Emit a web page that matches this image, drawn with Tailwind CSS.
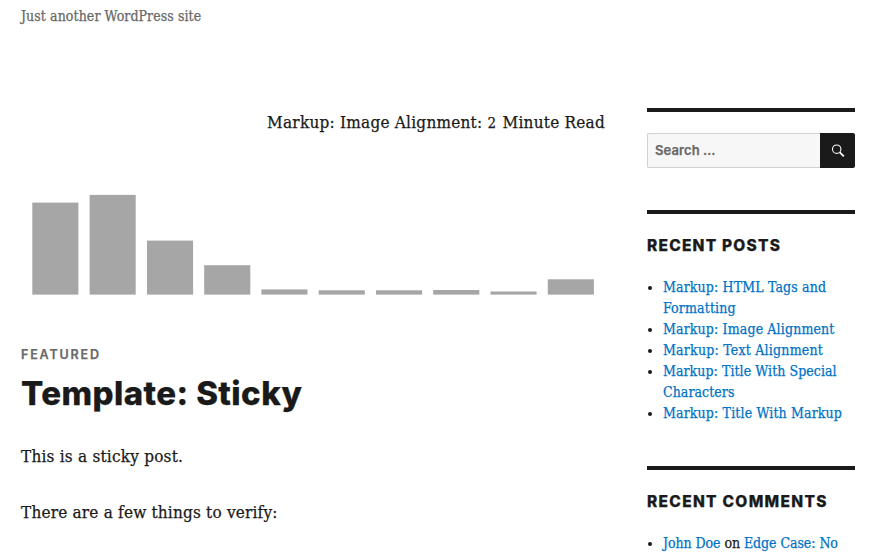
<!DOCTYPE html>
<html lang="en">
<head>
<meta charset="utf-8">
<title>WordPress site</title>
<script src="https://cdn.jsdelivr.net/npm/@tailwindcss/browser@4"></script>
</head>
<body class="h-[555px] overflow-hidden bg-white font-['DejaVu_Serif_Condensed','DejaVu_Serif',serif] text-[#1a1a1a] [-webkit-text-stroke-width:0.25px]">
<header class="h-[108px] pt-1.5 pl-[21px]">
  <p class="text-[14px] leading-[20px] tracking-[0.08px] text-[#686868]">Just another WordPress site</p>
</header>
<div class="flex">
  <main class="w-[605px] shrink-0 pl-[21px]">
    <p class="whitespace-nowrap text-right text-[17px] leading-[28px] tracking-[0.24px]">Markup: Image Alignment: <span class="inline-block w-[10px] text-left text-[15px] leading-none">2</span> Minute Read</p>
    <svg class="mt-[44px] block h-[130px] w-[584px]" viewBox="21 180 584 130" fill="#a6a6a6">
      <rect x="32.3" y="202.6" width="46.1" height="92"/>
      <rect x="89.6" y="194.9" width="46.1" height="99.7"/>
      <rect x="147" y="240.6" width="46.1" height="54"/>
      <rect x="204.2" y="265.2" width="46.1" height="29.4"/>
      <rect x="261.4" y="289.4" width="46.1" height="5.2"/>
      <rect x="318.7" y="290.3" width="46.1" height="4.3"/>
      <rect x="376" y="290.3" width="46.1" height="4.3"/>
      <rect x="433.2" y="290" width="46.1" height="4.6"/>
      <rect x="490.5" y="291.5" width="46.1" height="3.1"/>
      <rect x="547.8" y="279.3" width="46.1" height="15.3"/>
    </svg>
    <article class="pt-[35px]">
      <p class="font-[Inter,sans-serif] text-[12.5px] font-semibold leading-[20px] tracking-[1.85px] text-[#686868]">FEATURED</p>
      <h2 class="mt-2 font-[Inter,sans-serif] text-[33px] font-extrabold leading-[40px] tracking-[0.42px]">Template: Sticky</h2>
      <p class="mt-[29px] text-[17px] leading-[28px] tracking-[0.22px]">This is a sticky post.</p>
      <p class="mt-[28px] text-[17px] leading-[28px] tracking-[0.2px]">There are a few things to verify:</p>
    </article>
  </main>
  <aside class="ml-[42px] w-[208px] shrink-0 text-[14px] leading-[21px]">
    <section class="h-[102px] border-t-4 border-[#1a1a1a] pt-[21px]">
      <form class="flex h-[35px]">
        <div class="flex w-[173px] items-center rounded-l-[2px] border border-r-0 border-[#d1d1d1] bg-[#f7f7f7] pl-[7px] font-[Inter,sans-serif] text-[13px] font-semibold tracking-[0.1px] text-[#686868]">Search …</div>
        <button type="button" aria-label="Search" class="flex w-[35px] items-center justify-center rounded-r-[2px] bg-[#1a1a1a]">
          <svg class="size-[14px]" viewBox="0 0 14 14" fill="none" stroke="#fff"><circle cx="5.7" cy="5.2" r="4.2" stroke-width="1.1"/><path d="M8.8 8.3l4 4" stroke-width="1.8"/></svg>
        </button>
      </form>
    </section>
    <section class="h-[256px] border-t-4 border-[#1a1a1a] pt-[21px]">
      <h2 class="whitespace-nowrap font-[Inter,sans-serif] text-[15.5px] font-extrabold tracking-[1.22px]">RECENT POSTS</h2>
      <ul class="mt-[21px] list-none tracking-[0.14px] text-[#0073c4]">
        <li class="flex"><span class="mt-[9px] ml-[1px] mr-[11px] size-1 shrink-0 rounded-full bg-[#1a1a1a]"></span><a>Markup: HTML Tags and<br>Formatting</a></li>
        <li class="flex"><span class="mt-[9px] ml-[1px] mr-[11px] size-1 shrink-0 rounded-full bg-[#1a1a1a]"></span><a>Markup: Image Alignment</a></li>
        <li class="flex"><span class="mt-[9px] ml-[1px] mr-[11px] size-1 shrink-0 rounded-full bg-[#1a1a1a]"></span><a class="tracking-[0.22px]">Markup: Text Alignment</a></li>
        <li class="flex"><span class="mt-[9px] ml-[1px] mr-[11px] size-1 shrink-0 rounded-full bg-[#1a1a1a]"></span><a class="tracking-[0.06px]">Markup: Title With Special<br>Characters</a></li>
        <li class="flex"><span class="mt-[9px] ml-[1px] mr-[11px] size-1 shrink-0 rounded-full bg-[#1a1a1a]"></span><a>Markup: Title With Markup</a></li>
      </ul>
    </section>
    <section class="border-t-4 border-[#1a1a1a] pt-[21px]">
      <h2 class="whitespace-nowrap font-[Inter,sans-serif] text-[15.5px] font-extrabold tracking-[1.3px]">RECENT COMMENTS</h2>
      <ul class="mt-[21px] list-none tracking-[-0.06px]">
        <li class="flex"><span class="mt-[9px] ml-[1px] mr-[11px] size-1 shrink-0 rounded-full bg-[#1a1a1a]"></span><p class="whitespace-nowrap"><a class="text-[#0073c4]">John Doe</a> on <a class="text-[#0073c4]">Edge Case: No</a></p></li>
      </ul>
    </section>
  </aside>
</div>
</body>
</html>
